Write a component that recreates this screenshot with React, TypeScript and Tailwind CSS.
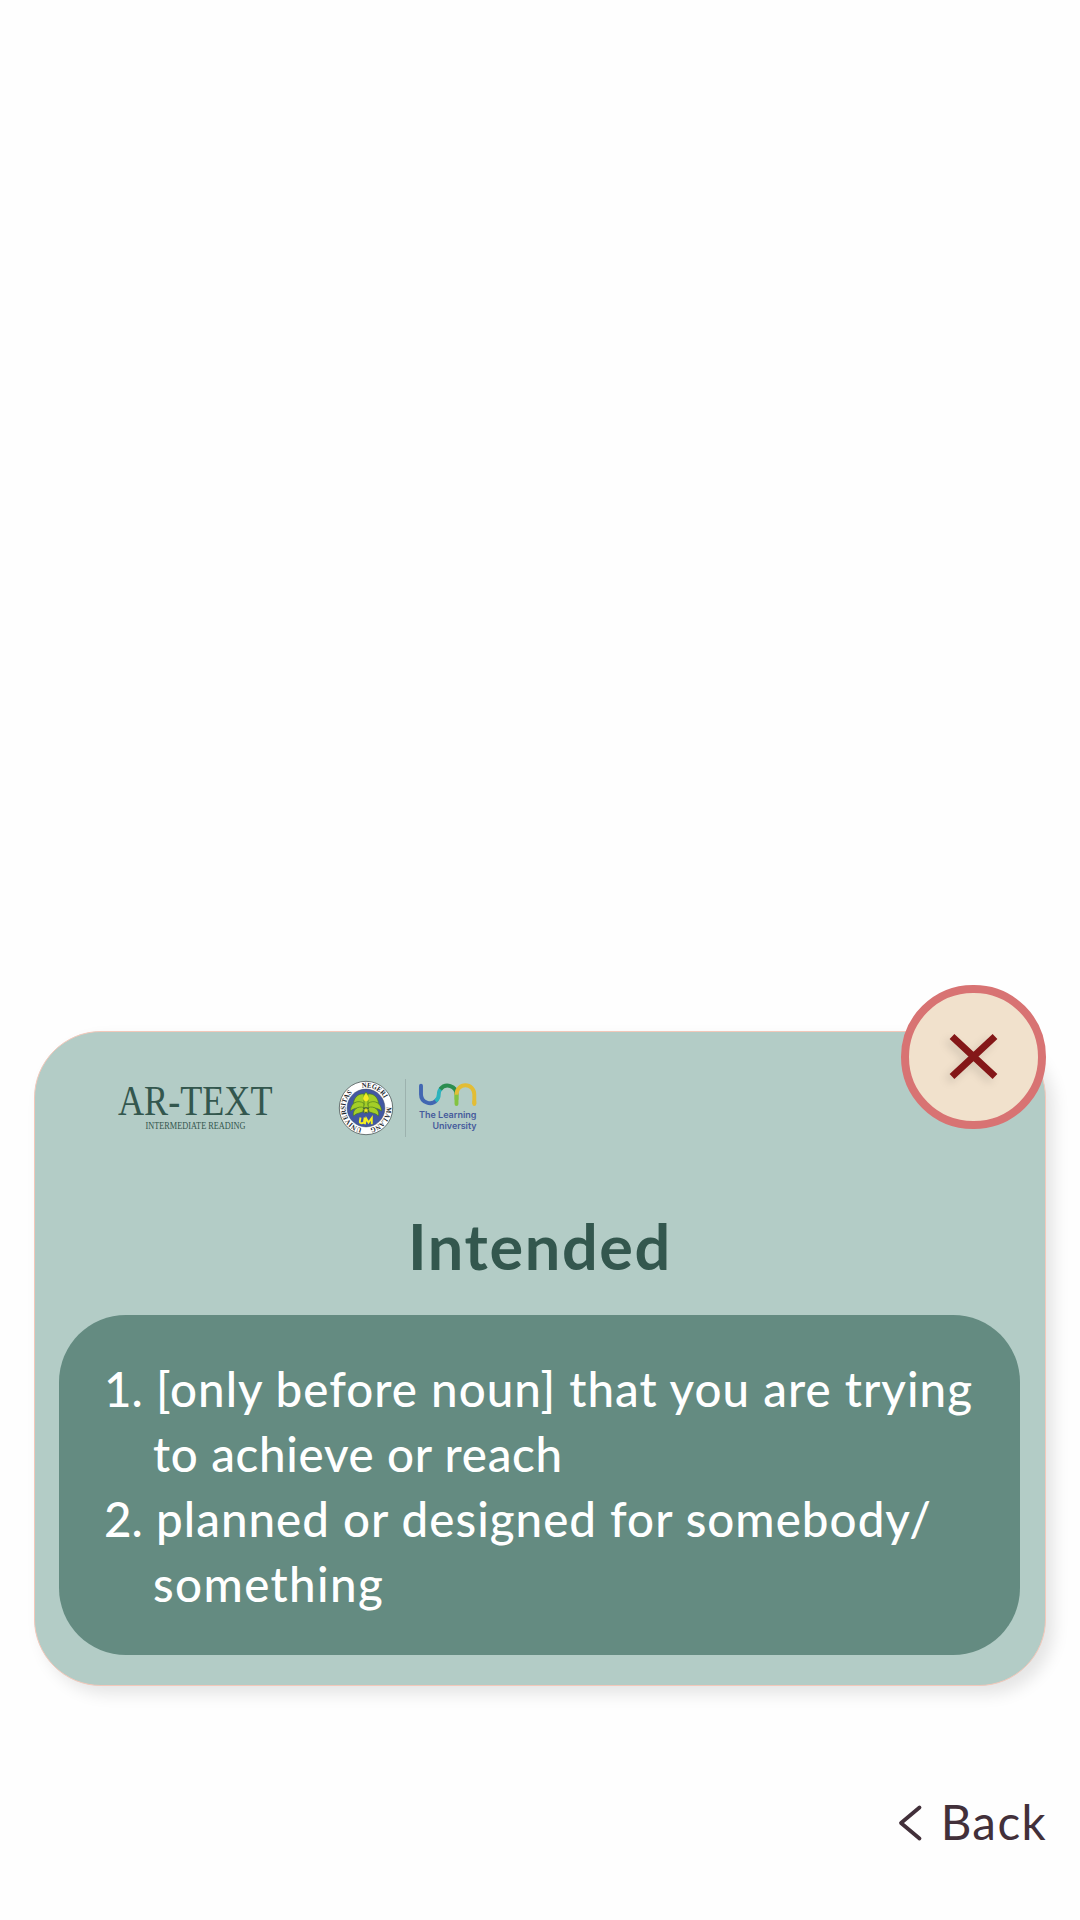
import React from "react";

const LEAVES = [
  "M-2 -14 C-8 -15 -12.5 -9.5 -12.5 -4.5 C-9 -6.5 -5 -5 -2 -2.5Z",
  "M-2 -4.500 C-8 -9 -15.500 -5 -15.500 3 C-11 -.5 -7 -.5 -2.500 1Z",
  "M-2.500 -.5 C-8 -2.500 -14 2 -12.500 8 C-9 4.500 -5.500 5.500 -2 3Z",
];

function CampusEmblem() {
  return (
    <svg width="56" height="56" viewBox="-28 -28 56 56" className="block shrink-0">
      <defs>
        <path id="ring" d="M0 20.500 A20.500 20.500 0 0 1 0 -20.500 A20.500 20.500 0 0 1 0 20.500 A20.500 20.500 0 0 1 0 -20.500" />
      </defs>
      <circle r="26.7" fill="#fff" stroke="#4a5556" strokeWidth="0.8" />
      <circle r="18.9" fill="#4257a2" stroke="#39465e" strokeWidth="0.5" />
      <g fontFamily="Liberation Serif, serif" fontWeight="700" fontSize="7.2" fill="#20242c">
        <text textLength="45" lengthAdjust="spacingAndGlyphs"><textPath href="#ring" startOffset="4">UNIVERSITAS</textPath></text>
        <text textLength="26" lengthAdjust="spacingAndGlyphs"><textPath href="#ring" startOffset="60">NEGERI</textPath></text>
        <text textLength="29" lengthAdjust="spacingAndGlyphs"><textPath href="#ring" startOffset="95">MALANG</textPath></text>
      </g>
      <g fill="#a4ce27" stroke="#42741f" strokeWidth="0.6">
        <path d="M0 -16 L5 -10 L3 1 H-3 L-5 -10Z" />
        {LEAVES.map((d) => <path key={d} d={d} />)}
        <g transform="scale(-1 1)">
          {LEAVES.map((d) => <path key={d} d={d} />)}
        </g>
      </g>
      <path d="M0 -14.5 C-4 -10.5 -3.6 -7.5 0 -6.6 C3.6 -7.5 4 -10.5 0 -14.5Z" fill="#f4e824" />
      <circle cy="2.3" r="3.2" fill="#4b6b38" />
      <path d="M0 -0.5 L.8 1.4 2.9 1.5 1.3 2.8 1.9 4.8 0 3.6 -1.9 4.8 -1.3 2.8 -2.9 1.5 -.8 1.4Z" fill="#f4e824" />
      <path d="M-5.500 9.500 L-6.200 13.500 Q-6.400 15.300 -4.200 15.300 Q-2.400 15.300 -2 13.500 L-1.300 9.500 M-1.200 16.200 L.2 10.500 L2.500 14.500 L5.800 10 L5.800 16.200" fill="none" stroke="#f4ef22" strokeWidth="1.900" />
    </svg>
  );
}

function UniversityMark() {
  return (
    <svg width="60" height="52" viewBox="0 0 60 52" className="block shrink-0">
      <g fill="none" strokeWidth="3.9" transform="translate(0 .7)">
        <path d="M3 4 V12.500 A8.900 8.900 0 0 0 18.500 18.500" stroke="#4267b2" strokeLinecap="round" />
        <path d="M17.500 19.300 C20 17.500 20.800 15 20.800 12.500 C20.800 10 21.700 8 23.500 6.300" stroke="#2cb3bd" />
        <path d="M22.300 7.500 C27.500 .8 38.500 4 38.500 12.800" stroke="#2b8d4f" />
        <path d="M38.500 12.500 V22.300" stroke="#83c341" strokeLinecap="round" />
        <path d="M38.500 13.500 V12.500 A8.900 8.900 0 0 1 56.300 12.500 V22.300" stroke="#e3bd35" />
        <path d="M56.300 20 V22.300" stroke="#e3bd35" strokeLinecap="round" />
        <path d="M38.500 13 V18" stroke="#83c341" />
      </g>
      <g fontFamily="Inter, sans-serif" fontWeight="600" fontSize="8.8" fill="#465b9c">
        <text x="1" y="37" textLength="57.500" lengthAdjust="spacingAndGlyphs">The Learning</text>
        <text x="14.500" y="48" textLength="44" lengthAdjust="spacingAndGlyphs">University</text>
      </g>
    </svg>
  );
}

function Wordmark() {
  return (
    <svg width="156" height="54" viewBox="0 0 156 54" className="block shrink-0 overflow-visible">
      <g fontFamily="Liberation Serif, serif" fill="#33574e">
        <text x="1" y="33" fontSize="42" textLength="154.500" lengthAdjust="spacingAndGlyphs">AR-TEXT</text>
        <text x="28.500" y="47.300" fontSize="10" textLength="100" lengthAdjust="spacingAndGlyphs">INTERMEDIATE READING</text>
      </g>
    </svg>
  );
}

export default function App() {
  return (
    <main className="flex h-[1920px] w-[1080px] flex-col overflow-hidden bg-[#fefefe] px-[34px] pt-[1031px] font-['Lato',sans-serif]">
      <section className="relative h-[655px] w-[1012px] rounded-[67px] border border-[#f3c8ba] bg-[#b3ccc6] pr-[25px] pl-6 shadow-[8px_8px_16px_rgba(0,0,0,0.1)]">
        <header className="flex h-[105px] items-start pt-[45px] pl-[58px]">
          <div className="pt-[5px]"><Wordmark /></div>
          <div className="ml-[65px] pt-[3px]"><CampusEmblem /></div>
          <div className="ml-[11px] mt-[2px] h-[58px] w-px bg-[#9cb2ae]" />
          <div className="ml-[12px] pt-[4px]"><UniversityMark /></div>
        </header>
        <button aria-label="Close" className="absolute -top-[47px] right-[-1px] flex h-[144px] w-[145px] items-center justify-center rounded-full border-8 border-[#d87373] bg-[#f1e1cc]">
          <svg width="72" height="72" viewBox="0 0 72 72" className="drop-shadow-[-4px_4px_4px_rgba(0,0,0,0.12)]">
            <path d="M14 15.500 L57 55.500 M57 15.500 L14 55.500" fill="none" stroke="#841718" strokeWidth="7" />
          </svg>
        </button>
        <h1 className="mt-[71px] pl-[349px] whitespace-nowrap text-[63px]/[76px] font-bold tracking-[1.650px] text-[#33574e]">Intended</h1>
        <div className="mt-[31px] h-[340px] rounded-[67px] bg-[#648b81] pt-[41px] pl-[45px] text-[47.500px]/[65px] font-medium text-white">
          <ol className="whitespace-nowrap">
            <li>
              <p><span className="inline-block w-[52px]">1.</span><span className="tracking-[1.030px]">[only before noun] that you are trying</span></p>
              <p className="pl-[49px] tracking-[0.700px]">to achieve or reach</p>
            </li>
            <li>
              <p><span className="inline-block w-[52px]">2.</span><span className="tracking-[1.030px]">planned or designed for somebody/</span></p>
              <p className="pl-[49px] tracking-[1.400px]">something</p>
            </li>
          </ol>
        </div>
      </section>
      <button className="mt-[106px] flex items-center self-end text-[#42303a]">
        <svg width="26" height="38" viewBox="0 0 26 38" className="mt-[2px] mr-[17px]">
          <path d="M21.500 3.500 L3 19 L21.500 34.500" fill="none" stroke="currentColor" strokeWidth="3.800" strokeLinecap="round" strokeLinejoin="round" />
        </svg>
        <span className="-mr-px text-[47.500px]/[60px] tracking-[1.400px]">Back</span>
      </button>
    </main>
  );
}
